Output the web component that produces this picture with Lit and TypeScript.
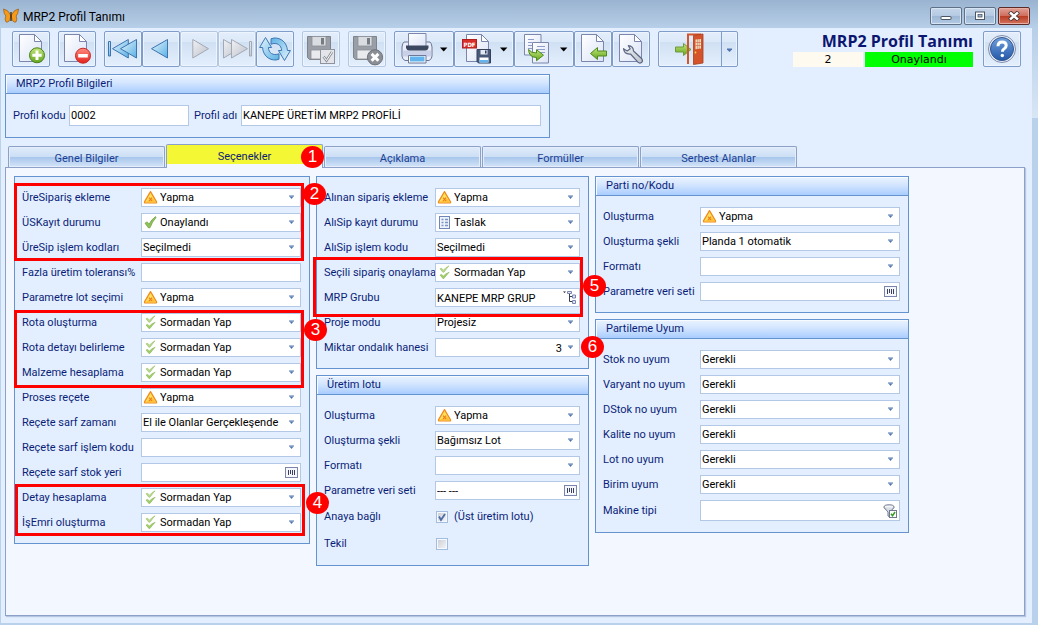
import { LitElement, html, css, svg, nothing } from "lit";
import { customElement, property, state } from "lit/decorators.js";
import { classMap } from "lit/directives/class-map.js";

type IconName = "warn" | "ok" | "double" | "draft" | "";
type Kind = "select" | "text" | "lookup" | "tree" | "spin" | "filter" | "check";

interface Field {
  label: string;
  value?: string;
  icon?: IconName;
  kind?: Kind;
  checked?: boolean;
  note?: string;
}

const WARN = { value: "Yapma", icon: "warn" as IconName };
const ASKLESS = { value: "Sormadan Yap", icon: "double" as IconName };

const ORDER_FIELDS: Field[] = [
  { label: "ÜreSipariş ekleme", ...WARN },
  { label: "ÜSKayıt durumu", value: "Onaylandı", icon: "ok" },
  { label: "ÜreSip işlem kodları", value: "Seçilmedi" },
  { label: "Fazla üretim toleransı%", kind: "text" },
  { label: "Parametre lot seçimi", ...WARN },
  { label: "Rota oluşturma", ...ASKLESS },
  { label: "Rota detayı belirleme", ...ASKLESS },
  { label: "Malzeme hesaplama", ...ASKLESS },
  { label: "Proses reçete", ...WARN },
  { label: "Reçete sarf zamanı", value: "El ile Olanlar Gerçekleşende" },
  { label: "Reçete sarf işlem kodu" },
  { label: "Reçete sarf stok yeri", kind: "lookup" },
  { label: "Detay hesaplama", ...ASKLESS },
  { label: "İşEmri oluşturma", ...ASKLESS },
];

const SALES_FIELDS: Field[] = [
  { label: "Alınan sipariş ekleme", ...WARN },
  { label: "AlıSip kayıt durumu", value: "Taslak", icon: "draft" },
  { label: "AlıSip işlem kodu", value: "Seçilmedi" },
  { label: "Seçili sipariş onaylama", ...ASKLESS },
  { label: "MRP Grubu", value: "KANEPE MRP GRUP", kind: "tree" },
  { label: "Proje modu", value: "Projesiz" },
  { label: "Miktar ondalık hanesi", value: "3", kind: "spin" },
];

const LOT_FIELDS: Field[] = [
  { label: "Oluşturma", ...WARN },
  { label: "Oluşturma şekli", value: "Bağımsız Lot" },
  { label: "Formatı" },
  { label: "Parametre veri seti", value: "--- ---", kind: "lookup" },
  { label: "Anaya bağlı", kind: "check", checked: true, note: "(Üst üretim lotu)" },
  { label: "Tekil", kind: "check" },
];

const BATCH_FIELDS: Field[] = [
  { label: "Oluşturma", ...WARN },
  { label: "Oluşturma şekli", value: "Planda 1 otomatik" },
  { label: "Formatı" },
  { label: "Parametre veri seti", kind: "lookup" },
];

const MATCH_FIELDS: Field[] = [
  { label: "Stok no uyum", value: "Gerekli" },
  { label: "Varyant no uyum", value: "Gerekli" },
  { label: "DStok no uyum", value: "Gerekli" },
  { label: "Kalite no uyum", value: "Gerekli" },
  { label: "Lot no uyum", value: "Gerekli" },
  { label: "Birim uyum", value: "Gerekli" },
  { label: "Makine tipi", kind: "filter" },
];

const TABS = ["Genel Bilgiler", "Seçenekler", "Açıklama", "Formüller", "Serbest Alanlar"];

/* ---------- small icons ---------- */

const smallIcons: Record<string, unknown> = {
  warn: svg`<path d="M7.5 1.6 13.4 11.6Q14 13 12.6 13H2.4Q1 13 1.6 11.6Z" fill="#ffe05c" stroke="#f08a1c" stroke-width="1.2" stroke-linejoin="round"/><path d="M2.6 12h9.8L10 8.2Q7 9.6 2.6 12Z" fill="#ffbf38"/><path d="M6 7.6 9 11M9 7.6 6 11" stroke="#ee7a1e" stroke-width="1.1"/>`,
  ok: svg`<path d="M2 8.2 4.2 6.9 6 9.2Q8.2 4.6 12.6 1.6L13 2.6Q9 7 7 12.8L5.4 12.8Z" fill="#8fc257" stroke="#6a9c3c" stroke-width=".7"/>`,
  double: svg`<path d="M3 3.8 4.6 3.2 6.4 5.2Q8.6 2.4 12 .8 9.6 3.8 7 7.2H5.8Z" fill="#b9d98d" stroke="#8fb95c" stroke-width=".5"/><path d="M3 10 4.6 9.4 6.4 11Q8.6 8.4 12.2 7.2 9.6 10 7 13.4H5.8Z" fill="#a2cf6c" stroke="#7eac49" stroke-width=".5"/>`,
  draft: svg`<rect x="2.5" y="1.5" width="10" height="12" fill="#eef3fc" stroke="#6f86b8"/><path d="M4.5 4.5h2M4.5 7.5h2M4.5 10.5h2M8 4.5h3M8 7.5h3M8 10.5h3" stroke="#7c92c4" stroke-width="1.4"/>`,
};

const smallIcon = (name: IconName) =>
  html`<svg class="mini" viewBox="0 0 15 15" aria-hidden="true">${smallIcons[name]}</svg>`;

const caret = html`<svg class="caret" viewBox="0 0 7 5" aria-hidden="true"><path d="M1 .5h5v1H1z" fill="#4f75b0"/><path d="M1.5 1.5h4L3.5 4z" fill="#4f75b0"/></svg>`;

/* ---------- toolbar icons ---------- */

const page = (x: number, y: number, w = 22, h = 27) => svg`
  <path d="M${x} ${y}h${w - 7}l7 7v${h - 7}h${-w}z" fill="url(#paper)" stroke="#7b86ac"/>
  <path d="M${x + w - 7} ${y}v7h7z" fill="#fff" stroke="#7b86ac" stroke-linejoin="round"/>`;

const floppyGray = svg`
  <path d="M5.5 5.5h23v23h-21l-2-2z" fill="#9a9ea6" stroke="#7f8389"/>
  <rect x="10" y="5.5" width="14" height="9.5" fill="#d9dce1" stroke="#8c9097" stroke-width=".8"/>
  <rect x="19" y="7" width="3" height="6.5" fill="#777b82"/>
  <rect x="9" y="19" width="16" height="9" fill="#e8eaee" stroke="#8c9097" stroke-width=".8"/>`;

const defs = svg`<defs>
  <linearGradient id="paper" x1="0" y1="0" x2="1" y2="1"><stop offset="0" stop-color="#fff"/><stop offset="1" stop-color="#dbe3f6"/></linearGradient>
  <linearGradient id="sky" x1="0" y1="0" x2="1" y2="1"><stop offset="0" stop-color="#e6f5fd"/><stop offset="1" stop-color="#5ab0e4"/></linearGradient>
  <linearGradient id="ash" x1="0" y1="0" x2="1" y2="1"><stop offset="0" stop-color="#f0f1f4"/><stop offset="1" stop-color="#bcc1ca"/></linearGradient>
  <linearGradient id="lime" x1="0" y1="0" x2="0" y2="1"><stop offset="0" stop-color="#c3e57a"/><stop offset="1" stop-color="#62a51f"/></linearGradient>
  <linearGradient id="rose" x1="0" y1="0" x2="0" y2="1"><stop offset="0" stop-color="#ff8b80"/><stop offset="1" stop-color="#e5211c"/></linearGradient>
  <linearGradient id="deep" x1="0" y1="0" x2="0" y2="1"><stop offset="0" stop-color="#6f9fdc"/><stop offset="1" stop-color="#2358a8"/></linearGradient>
</defs>`;

const blackCaret = svg`<path d="M46 16.5h7.4L49.7 20.4z" fill="#000"/>`;

const tools: Record<string, unknown> = {
  add: svg`${page(7.5, 3.5)}<circle cx="25" cy="24.3" r="7.5" fill="url(#lime)" stroke="#4c7f1c"/><path d="M25 19.6v9.4M20.3 24.3h9.4" stroke="#fff" stroke-width="3"/>`,
  remove: svg`${page(6.5, 3.5)}<circle cx="25" cy="24.7" r="7.5" fill="url(#rose)" stroke="#c42a26"/><path d="M20.2 24.7h9.6" stroke="#fff" stroke-width="3.4"/>`,
  first: svg`<g fill="url(#sky)" stroke="#3d74b0" stroke-linejoin="round"><rect x="4.5" y="10.5" width="2" height="14.5"/><path d="M8.5 17.7 24.3 8.5v18.5z"/><path d="M16.5 17.7 32.5 8.5v18.5z"/></g>`,
  prev: svg`<path d="M9.5 17.7 25.5 8.5v18.5z" fill="url(#sky)" stroke="#3d74b0" stroke-linejoin="round"/>`,
  next: svg`<path d="M28.5 17.7 12.8 8.5v18.5z" fill="url(#ash)" stroke="#a3a9b4" stroke-linejoin="round"/>`,
  last: svg`<g fill="url(#ash)" stroke="#a3a9b4" stroke-linejoin="round"><path d="M21.5 17.7 5.5 8.5v18.5z"/><path d="M29.5 17.7 13.5 8.5v18.5z"/><rect x="31.5" y="10.5" width="2" height="14.5"/></g>`,
  refresh: svg`<g fill="url(#sky)" stroke="#3d78b4" stroke-linejoin="round"><path d="M9.5 6.5 3.6 16.5H6.6C7 24.5 13 29.4 20 29l3-.8V22.8C17 25 12.6 22 12.4 16.5h3.2z"/><path transform="rotate(180 19 18)" d="M9.5 6.5 3.6 16.5H6.6C7 24.5 13 29.4 20 29l3-.8V22.8C17 25 12.6 22 12.4 16.5h3.2z"/></g>`,
  approve: svg`${floppyGray}<rect x="18.5" y="18.5" width="14" height="14" fill="#e3e5ea" stroke="#8f939b"/><path d="M21.5 25.5l3 4L30 21" fill="none" stroke="#8b8f97" stroke-width="2.6"/><path d="M21.5 25.5l3 4L30 21" fill="none" stroke="#fff" stroke-width="1"/>`,
  cancel: svg`${floppyGray}<circle cx="27" cy="26.3" r="7.6" fill="#8c8f95" stroke="#6f7278"/><path d="M23.6 22.9l6.8 6.8M30.4 22.9l-6.8 6.8" stroke="#fff" stroke-width="3"/>`,
  print: svg`<path d="M10 11h26q1.5 1 2 5v9q0 3-3 4.5H11q-3-1.5-3-4.5v-9q.5-4 2-5z" fill="#e9eefa" stroke="#6c7799"/><path d="M8.5 19.5h29v6h-29z" fill="#b9c4e0" opacity=".7"/><path d="M14.5 2.5h17.5v13H14.5z" fill="url(#paper)" stroke="#7b86ac"/><path d="M12 14.5h22.5v2.5q-1 2.5-3 2.5h-16.5q-2 0-3-2.5z" fill="#3c4760"/><path d="M14.5 24.5h17.5v7.5H14.5z" fill="#fff" stroke="#6c7799"/><path d="M16 25.5h14.5v5H16z" fill="#62b4ee"/>${blackCaret}`,
  pdf: svg`${page(12.5, 3.5)}<rect x="8.5" y="8.5" width="14" height="8.5" fill="#d92f2a" stroke="#b01f1d"/><text class="pdf" x="15.5" y="15.5" text-anchor="middle">PDF</text><path d="M23 18.5h13.5v13.5H24.5l-1.5-1.5z" fill="#4a5878" stroke="#35405c"/><path d="M26.5 19h7v4.5h-7z" fill="#e4e9f4"/><path d="M31 19.5h1.5v3H31z" fill="#35405c"/><path d="M25.5 26.5h9v5h-9z" fill="#fff"/><path d="M25.5 29h9v2.5h-9z" fill="#62b4ee"/>${blackCaret}`,
  copy: svg`<path d="M10.5 3.5h16.5v20.5H10.5z" fill="url(#paper)" stroke="#7b86ac"/><path d="M14 8.5h6M14 11.5h4M14 14.5h4M14 17.5h4" stroke="#8d9cc8"/><path d="M18.5 11.5h16v20.5h-16z" fill="url(#paper)" stroke="#7b86ac"/><path d="M23 15.5h8M23 18.5h8M25 21.5h6" stroke="#8d9cc8"/><path d="M14.5 18.5Q17 22 22.5 22V18.7l7 5.5-7 5.5V26.5Q15 26.5 14.5 18.5z" fill="url(#lime)" stroke="#4c8a1c" stroke-linejoin="round"/>${blackCaret}`,
  load: svg`${page(7.5, 3.5)}<path d="M16.5 22.5 23.5 16.5v3.5h9v5h-9v3.5z" fill="url(#lime)" stroke="#4c8a1c" stroke-linejoin="round"/>`,
  settings: svg`${page(7.5, 3.5)}<path d="M16.3 14.7q5 .3 5.2 5.3l8.3 7.8q1.5 2.2-.3 3.8-2 1.2-3.6-.4l-7.4-8.2q-6.2.6-7-5.3l3.7 2.3 3-2.2z" fill="url(#ash)" stroke="#5d6884" stroke-width="1.2" stroke-linejoin="round"/>`,
  exit: svg`<path d="M17.5 16h8v-3.5l7.5 6-7.5 6V21h-8z" fill="url(#lime)" stroke="#6b9b3a" stroke-linejoin="round"/><path d="M30 33V3.5h13" fill="none" stroke="#d3552c" stroke-width="2"/><path d="M35.5 4.5 45 3v29l-9.5 1.5z" fill="#d4532a" stroke="#a93d1c" stroke-width=".8"/><path d="M37.5 8.5 43 8v9.5l-5.5.8z" fill="#f7e3c4"/><path d="M39.3 8v10M41.2 8v10M37.5 11.5H43M37.5 14.5H43" stroke="#b8502b" stroke-width=".5"/><circle cx="37.5" cy="21.5" r=".9" fill="#ffd84a"/>`,
  help: svg`<circle cx="19" cy="18" r="13.5" fill="#e9eef8" stroke="#7d8cab"/><circle cx="19" cy="18" r="11.5" fill="url(#deep)" stroke="#33568f"/><path d="M15 15.2q0-4.2 4.2-4.2 4 0 4 3.6 0 2-2 3.2-1.8 1-1.8 3" fill="none" stroke="#fff" stroke-width="3"/><circle cx="19.3" cy="24.5" r="1.7" fill="#fff"/>`,
};

@customElement("tool-button")
export class ToolButton extends LitElement {
  static styles = css`
    :host { display: block; flex: none; }
    .tool {
      display: block; box-sizing: border-box; width: 38px; height: 36px; padding: 0;
      border: 1px solid #7e9dca; border-radius: 2px; overflow: hidden;
      background: linear-gradient(#e4eefb 0, #dce9f8 28%, #d0e0f3 29%, #e4effc 100%);
      box-shadow: inset 0 0 0 1px #edf4fd;
    }
    .tool:disabled { border-color: #b4c8e2; }
    .wide { width: 60px; }
    .exit { width: 80px; }
    .art { display: block; margin: -1px; }
    .pdf { font: bold 6px "DejaVu Sans Condensed", sans-serif; fill: #fff; }
  `;

  @property() name = "add";
  @property() label = "";
  @property({ type: Boolean }) disabled = false;

  render() {
    const wide = ["print", "pdf", "copy"].includes(this.name);
    const exit = this.name === "exit";
    const width = exit ? 80 : wide ? 60 : 38;
    return html`<button class=${classMap({ tool: true, wide, exit })} type="button" aria-label=${this.label} ?disabled=${this.disabled}>
      <svg class="art" width=${width} height="36" viewBox="0 0 ${width} 36">
        ${defs}${tools[this.name]}
        ${exit ? svg`<path d="M63.5 1v34" stroke="#7e9dca"/><path d="M69 17.5h5v1l-2.5 2.5-2.5-2.5z" fill="#4f75b0"/>` : nothing}
      </svg>
    </button>`;
  }
}

@customElement("field-group")
export class FieldGroup extends LitElement {
  static styles = css`
    :host { display: block; font: 11px/19px var(--ui-font); color: #0b1e77; }
    .group { border: 1px solid #6593cf; background: #e3efff; }
    .head {
      margin: 0; height: 18px; padding-left: 10px; font: inherit; line-height: 18px;
      border-bottom: 1px solid #6593cf;
      background: linear-gradient(#eaf3ff, #d3e5ff 45%, #a9cdff);
      box-shadow: inset 1px 1px 0 #f7fbff;
    }
    .rows { display: grid; gap: 6px; padding: 11px 8px 11px 7px; }
    .row { display: grid; grid-template-columns: var(--label-width, 119px) minmax(0, 1fr); }
    .label { white-space: nowrap; }
    .tall { line-height: 21px; }
    .field {
      box-sizing: border-box; height: 19px; border: 1px solid #b3c8e6; background: #fff; color: #000;
      display: grid; grid-template-columns: 18px minmax(0, 1fr) 18px; align-items: center;
    }
    .tall .field { height: 21px; }
    .input {
      grid-area: 1 / 1 / 2 / 4; box-sizing: border-box; width: 100%; height: 100%; margin: 0; padding: 1px 17px 0 1px;
      border: 0; outline: 0; background: none; appearance: none; font: inherit; line-height: 16px; color: #000;
    }
    .iconic { padding-left: 18px; }
    .number { text-align: right; }
    .mini { grid-area: 1 / 1; width: 15px; height: 15px; margin-left: 1px; pointer-events: none; }
    .caret, .look { grid-area: 1 / 3; justify-self: center; pointer-events: none; }
    .caret { width: 7px; height: 5px; }
    .checks { display: flex; align-items: center; gap: 6px; padding-left: 1px; height: 21px; }
    .box {
      appearance: none; box-sizing: border-box; width: 12px; height: 12px; margin: 0; display: grid;
      border: 1px solid #a3bde0; background: linear-gradient(135deg, #c9ccd4, #f6f7f9);
      box-shadow: inset 0 0 0 1px #f6f9fd;
    }
    .tick { display: grid; }
    .tick > * { grid-area: 1 / 1; }
    .mark { width: 12px; height: 12px; pointer-events: none; }
  `;

  @property() heading = "";
  @property({ attribute: false }) fields: Field[] = [];

  private trailing(kind: Kind) {
    switch (kind) {
      case "lookup":
        return html`<svg class="look" width="13" height="11" viewBox="0 0 13 11"><rect x=".5" y=".5" width="12" height="10" fill="#f5f7fb" stroke="#7b84ad"/><path d="M3.5 3v5M5.5 3v4M7.5 3v5M9.5 3v5" stroke="#39405f"/></svg>`;
      case "tree":
        return html`<svg class="look" width="14" height="13" viewBox="0 0 14 13"><path d="M0 .5h3L1.5 2z" fill="#222"/><path d="M5 2h3M6.5 2v8.5H10M6.5 5.5H10" fill="none" stroke="#333c55"/><path d="M9.5 4h3v3h-3zM9.5 9.5h3v3h-3z" fill="#dfe6f5" stroke="#7b84ad"/><path d="M4.5.5h4v2h-4z" fill="#dfe6f5" stroke="#7b84ad"/></svg>`;
      case "filter":
        return html`<svg class="look" width="14" height="14" viewBox="0 0 14 14"><ellipse cx="6" cy="3" rx="5" ry="2.2" fill="#f2f3f7" stroke="#70788f"/><path d="M1 3.5 5 8v4l2 1V8l4-4.5" fill="#d9dde6" stroke="#70788f"/><rect x="6.5" y="6.5" width="7" height="7" fill="#fff" stroke="#70788f"/><path d="M8 9.8l1.5 2L12 8" fill="none" stroke="#2f9c22" stroke-width="1.5"/></svg>`;
      case "text":
        return nothing;
      default:
        return caret;
    }
  }

  private control(f: Field, id: string) {
    const kind = f.kind ?? "select";
    if (kind === "check") {
      return html`<span class="checks">
        <span class="tick">
          <input class="box" type="checkbox" id=${id} ?checked=${f.checked} />
          ${f.checked ? html`<svg class="mark" viewBox="0 0 12 12"><path d="M3 5.5 5 9 9 3" fill="none" stroke="#4c6ca6" stroke-width="1.8"/></svg>` : nothing}
        </span>
        ${f.note ? html`<label for=${id}>${f.note}</label>` : nothing}
      </span>`;
    }
    const cls = classMap({ input: true, iconic: !!f.icon, number: kind === "spin" });
    return html`<span class="field">
      ${kind === "select"
        ? html`<select class=${cls} id=${id}><option>${f.value ?? ""}</option></select>`
        : html`<input class=${cls} id=${id} type="text" .value=${f.value ?? ""} />`}
      ${f.icon ? smallIcon(f.icon) : nothing}${this.trailing(kind)}
    </span>`;
  }

  render() {
    return html`<section class="group">
      ${this.heading ? html`<h2 class="head">${this.heading}</h2>` : nothing}
      <div class="rows">
        ${this.fields.map((f, i) => {
          const tall = f.kind === "check" || f.kind === "filter";
          return html`<div class=${classMap({ row: true, tall })}>
            <label class="label" for="f${i}">${f.label}</label>${this.control(f, `f${i}`)}
          </div>`;
        })}
      </div>
    </section>`;
  }
}

@customElement("app-root")
export class AppRoot extends LitElement {
  static styles = css`
    :host {
      --ui-font: Tahoma, Roboto, sans-serif;
      display: flex; flex-direction: column; position: relative; box-sizing: border-box; min-height: 100vh;
      background: #b9d1ea; font: 11px/19px var(--ui-font); color: #0b1e77;
    }
    .titlebar {
      height: 28px; display: flex; align-items: center; padding: 4px 8px 0 3px; box-sizing: border-box; gap: 4px;
      background: linear-gradient(#9ab3d0, #b7cfe8);
    }
    .caption { margin: 0; flex: 1; padding-top: 2px; font: 12px/20px Roboto, sans-serif; color: #000; }
    .winbuttons { display: flex; gap: 2px; }
    .win {
      width: 32px; height: 18px; padding: 0; border: 1px solid #5f7186; border-radius: 2px; display: grid; place-items: center;
      background: linear-gradient(#c5d6ea, #b5cae2 48%, #9db6d3 50%, #b3cbe5); box-shadow: inset 0 0 0 1px #d6e4f3;
    }
    .close { border-color: #5c2a27; background: linear-gradient(#e0a196, #cf6f5f 48%, #b93a22 50%, #d3735c); box-shadow: inset 0 0 0 1px #e6aea4; }
    .frame { flex: 1; display: flex; border-left: 1px solid #b9d1ea; margin-bottom: 2px; }
    .edge { flex: none; width: 6px; background: linear-gradient(#b7cfe8, #d8e6f5) 0 0 / 100% 90px no-repeat; }
    .body { flex: 1; min-width: 0; display: flex; flex-direction: column; background: #e3efff; padding: 3px 7px 7px 4px; }
    .toolbar { display: flex; align-items: flex-start; padding: 0 4px 0 7px; margin-bottom: 7px; }
    .cluster { display: flex; margin-right: 8px; }
    .status { margin-left: auto; margin-right: 10px; display: grid; grid-template-columns: 70px 108px; column-gap: 2px; color: #000; }
    .name { grid-column: 1 / 3; margin: 0; text-align: right; font: bold 16px/21px "Open Sans", sans-serif; color: #0b1670; white-space: nowrap; }
    .count, .state { height: 15px; font: 11px/15px "DejaVu Sans", sans-serif; text-align: center; }
    .count { background: #fffaf0; }
    .state { background: #0f0; }
    .profile { width: 545px; max-width: 100%; box-sizing: border-box; border: 1px solid #6593cf; }
    .head {
      margin: 0; height: 18px; padding-left: 10px; font: inherit; line-height: 18px; border-bottom: 1px solid #6593cf;
      background: linear-gradient(#eaf3ff, #d3e5ff 45%, #a9cdff); box-shadow: inset 1px 1px 0 #f7fbff;
    }
    .line { display: flex; align-items: center; padding: 11px 8px 11px 7px; white-space: nowrap; }
    .code-label { width: 56px; }
    .name-label { width: 47px; padding-left: 5px; }
    .text {
      box-sizing: border-box; height: 21px; min-width: 0; margin: 0; padding: 0 1px; border: 1px solid #b3c8e6; border-radius: 0;
      background: #fff; font: inherit; color: #000; outline: 0;
    }
    .code { width: 120px; }
    .long { flex: 1; }
    .tabs { display: flex; align-items: flex-end; gap: 1px; padding-left: 3px; margin-top: 6px; }
    .tab {
      flex: 0 1 157px; height: 21px; padding: 2px 0 0; border: 1px solid #8ca0c8; border-bottom: 0; border-radius: 2px 2px 0 0;
      background: linear-gradient(#e0ebfa, #cddff5 48%, #a9c7ec 52%, #d3e4f8); box-shadow: inset 0 0 0 1px #e4eefb;
      font: inherit; color: #1c3f94;
    }
    .active {
      height: 24px; margin-bottom: -1px; padding-top: 0; z-index: 1; color: #0b1e77; box-shadow: none;
      background: linear-gradient(#f4f733 19px, #f3f7ff 19px);
    }
    .panel {
      flex: 1; border: 1px solid #8ca0c8; background: #f3f7ff; padding: 8px; display: flex; align-items: flex-start; gap: 6px;
      box-shadow: 1px 1px 1px #b4c6e2;
    }
    .col { display: grid; gap: 6px; min-width: 0; }
    .first { flex: 0 1 296px; --label-width: 119px; }
    .second { flex: 0 1 273px; --label-width: 111px; }
    .third { flex: 0 1 314px; --label-width: 97px; }
    /* Callouts float above the form. */
    .frame-mark { position: absolute; box-sizing: border-box; border: 3px solid #f00; pointer-events: none; z-index: 2; }
    .callout {
      position: absolute; width: 23px; height: 22px; border-radius: 50%; background: #f00; color: #fff; z-index: 3;
      font: 17px/22px "Liberation Sans", sans-serif; text-align: center; pointer-events: none;
    }
    .m2 { left: 14px; top: 183px; width: 290px; height: 78px; }
    .m3 { left: 14px; top: 310px; width: 290px; height: 78px; }
    .m4 { left: 15px; top: 484px; width: 290px; height: 52px; }
    .m5 { left: 313px; top: 257px; width: 270px; height: 60px; }
    .c1 { left: 301px; top: 146px; }
    .c2 { left: 303px; top: 183px; }
    .c3 { left: 304px; top: 319px; }
    .c4 { left: 306px; top: 492px; }
    .c5 { left: 583px; top: 275px; }
    .c6 { left: 581px; top: 336px; }
  `;

  @state() private active = 1;

  private tool(name: string, label: string, disabled = false) {
    return html`<tool-button name=${name} label=${label} ?disabled=${disabled}></tool-button>`;
  }

  render() {
    return html`
      <header class="titlebar">
        <svg width="16" height="16" viewBox="0 0 16 16" aria-hidden="true">
          <path d="M7.6 7Q5 1.5.5 1q.3 5 2.3 7-1.5 3 .2 6Q6.5 15 7.6 9zM8.4 7Q11 1.5 15.5 1q-.3 5-2.3 7 1.5 3-.2 6-3.5 1-4.6-5z" fill="#f59a1a" stroke="#8a5010" stroke-width=".6"/>
          <path d="M8 4v9" stroke="#3c2408" stroke-width="1.3"/>
        </svg>
        <h1 class="caption">MRP2 Profil Tanımı</h1>
        <div class="winbuttons">
          <button class="win" type="button" aria-label="Küçült"><svg width="12" height="10" viewBox="0 0 12 10"><rect x="1" y="5.5" width="10" height="3" rx=".5" fill="#fff" stroke="#4b5563"/></svg></button>
          <button class="win" type="button" aria-label="Büyüt"><svg width="12" height="10" viewBox="0 0 12 10"><rect x="1.5" y="1" width="9" height="7.5" fill="#fff" stroke="#4b5563"/><rect x="4" y="3.5" width="4" height="2.5" fill="#9db6d3" stroke="#4b5563" stroke-width=".8"/></svg></button>
          <button class="win close" type="button" aria-label="Kapat"><svg width="12" height="10" viewBox="0 0 12 10"><path d="M1.5 1 10.5 9M10.5 1 1.5 9" stroke="#4b3434" stroke-width="4.2"/><path d="M2 1.5 10 8.5M10 1.5 2 8.5" stroke="#fff" stroke-width="2.4"/></svg></button>
        </div>
      </header>
      <div class="frame">
        <main class="body">
          <div class="toolbar">
            <div class="cluster">${this.tool("add", "Yeni")}</div>
            <div class="cluster">${this.tool("remove", "Sil")}</div>
            <div class="cluster">
              ${this.tool("first", "İlk")}${this.tool("prev", "Önceki")}${this.tool("next", "Sonraki", true)}${this.tool("last", "Son", true)}${this.tool("refresh", "Yenile")}
            </div>
            <div class="cluster">${this.tool("approve", "Kaydet", true)}</div>
            <div class="cluster">${this.tool("cancel", "Vazgeç", true)}</div>
            <div class="cluster">
              ${this.tool("print", "Yazdır")}${this.tool("pdf", "PDF")}${this.tool("copy", "Kopyala")}${this.tool("load", "Aktar")}${this.tool("settings", "Ayarlar")}
            </div>
            <div class="cluster">${this.tool("exit", "Çıkış")}</div>
            <div class="status">
              <h2 class="name">MRP2 Profil Tanımı</h2>
              <span class="count">2</span><span class="state">Onaylandı</span>
            </div>
            ${this.tool("help", "Yardım")}
          </div>
          <section class="profile">
            <h2 class="head">MRP2 Profil Bilgileri</h2>
            <div class="line">
              <label class="code-label" for="code">Profil kodu</label>
              <input class="text code" id="code" type="text" value="0002" />
              <label class="name-label" for="title">Profil adı</label>
              <input class="text long" id="title" type="text" value="KANEPE ÜRETİM MRP2 PROFİLİ" />
            </div>
          </section>
          <div class="tabs" role="tablist">
            ${TABS.map((t, i) => html`<button type="button" role="tab" aria-selected=${i === this.active}
              class=${classMap({ tab: true, active: i === this.active })} @click=${() => (this.active = i)}>${t}</button>`)}
          </div>
          <div class="panel">
            <div class="col first"><field-group .fields=${ORDER_FIELDS}></field-group></div>
            <div class="col second">
              <field-group .fields=${SALES_FIELDS}></field-group>
              <field-group heading="Üretim lotu" .fields=${LOT_FIELDS}></field-group>
            </div>
            <div class="col third">
              <field-group heading="Parti no/Kodu" .fields=${BATCH_FIELDS}></field-group>
              <field-group heading="Partileme Uyum" .fields=${MATCH_FIELDS}></field-group>
            </div>
          </div>
        </main>
        <div class="edge"></div>
      </div>
      ${[2, 3, 4, 5].map((n) => html`<div class="frame-mark m${n}"></div>`)}
      ${[1, 2, 3, 4, 5, 6].map((n) => html`<div class="callout c${n}">${n}</div>`)}
    `;
  }
}
